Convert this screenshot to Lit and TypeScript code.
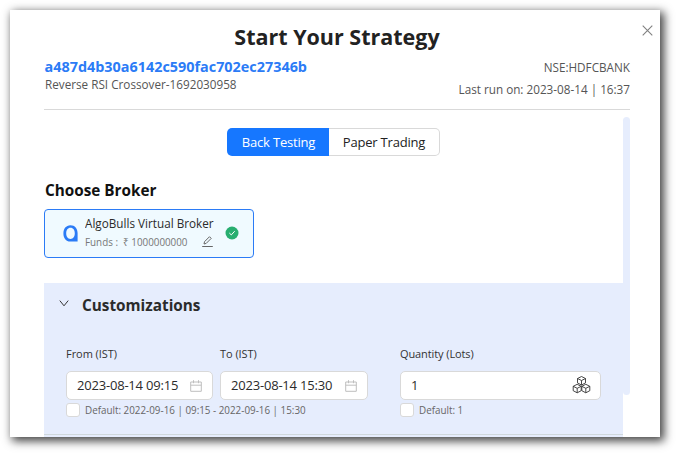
import { LitElement, html, css, svg } from "lit";
import { customElement, property } from "lit/decorators.js";

const calendar = html`<svg width="12" height="12" viewBox="0 0 12 12" fill="none" stroke="#bfbfbf">
  <path d="M.7 2h10.6v9.3H.7zM.7 5.2h10.6M3.5 .2v3M8.5 .2v3" />
</svg>`;

const cube = (x: number, y: number) => svg`<path transform="translate(${x} ${y})"
  d="M4.500 .5 8.500 2.500v4.400L4.500 9 .5 6.900V2.500zM.5 2.500l4 2 4-2M4.500 4.500v4.400" />`;

@customElement("date-field")
export class DateField extends LitElement {
  @property() label = "";
  @property() value = "";

  static styles = css`
    :host { display: block; }
    .label { font-size: 11px; line-height: 16px; color: #333; letter-spacing: -0.05px; }
    .box {
      box-sizing: border-box; height: 29px; margin-top: 9px; padding: 0 10px;
      display: flex; align-items: center; justify-content: space-between;
      background: #fff; border: 1px solid #d9d9d9; border-radius: 5px;
      font-size: 13px; line-height: 18px; color: #2b2b2b; white-space: nowrap; letter-spacing: -0.2px;
    }
    .box span { margin-top: -1px; }
    svg { display: block; flex: none; }
  `;

  render() {
    return html`
      <div class="label">${this.label}</div>
      <div class="box"><span>${this.value}</span>${calendar}</div>
    `;
  }
}

@customElement("app-root")
export class AppRoot extends LitElement {
  static styles = css`
    :host {
      display: block; box-sizing: border-box; width: 676px; height: 453px;
      padding: 10px 16px 16px 10px; background: #fff; overflow: hidden;
      font-family: "Open Sans", "Noto Sans", sans-serif; color: #222;
    }
    * { box-sizing: border-box; }
    svg { display: block; flex: none; }
    .dialog {
      position: relative; height: 427px; padding: 0 30px 0 34px;
      display: flex; flex-direction: column; background: #fff;
      box-shadow: 3px 3px 9px 1px rgba(0, 0, 0, 0.75);
    }
    .close { position: absolute; left: 632px; top: 15px; }
    h1 { margin: 12px 0 0; font-size: 21.5px; line-height: 30px; font-weight: 700; text-align: center; color: #222; }
    .head { display: flex; justify-content: space-between; height: 58px; border-bottom: 1px solid #d9d9d9; white-space: nowrap; }
    .id { margin: 5px 0 0 .5px; font-size: 14.4px; line-height: 20px; font-weight: 700; color: #2b7bf6; }
    .name { margin-left: .5px; font-size: 12.5px; line-height: 15px; color: #555; transform: scaleX(.937); transform-origin: left; }
    .meta { text-align: right; font-size: 12.5px; line-height: 22px; color: #555; padding-top: 5px; transform: scaleX(.937); transform-origin: right; }
    .scroll { flex: 1; min-height: 0; display: flex; overflow: hidden; }
    .body { width: 579px; flex: none; }
    .track { width: 7px; height: 278px; margin-top: 7px; border-radius: 4px; background: #e6edfd; }
    .tabs { display: flex; width: 213px; height: 28px; margin: 18px 0 0 183px; font-size: 13px; line-height: 28px; letter-spacing: -.2px; white-space: nowrap; }
    .tab { text-align: center; }
    .on { width: 102px; padding-left: 1px; color: #fff; background: #1677ff; border-radius: 5px 0 0 5px; }
    .off { width: 111px; line-height: 26px; border: 1px solid #d9d9d9; border-left: 0; border-radius: 0 5px 5px 0; }
    h2 { margin: 24px 0 0 .5px; font-size: 16px; line-height: 20px; font-weight: 700; color: #111; transform: scaleX(.955); transform-origin: left; }
    .broker {
      display: flex; align-items: center; width: 210px; height: 49px; margin-top: 9px; padding-left: 18px;
      background: #f0faff; border: 1px solid #2b7bf6; border-radius: 4px; white-space: nowrap;
    }
    .info { width: 128px; margin: -2px 0 0 7px; }
    .title { font-size: 12.5px; line-height: 18px; color: #2b2b2b; transform: scaleX(.937); transform-origin: left; }
    .funds { display: flex; align-items: center; justify-content: space-between; font-size: 10.3px; line-height: 18px; color: #777; }
    .small { display: block; transform: scaleX(.955); transform-origin: left; }
    .check { margin: -1px 0 0 12px; }
    .panel { height: 152px; margin-top: 25px; background: #e6edfd; border-bottom: 1px solid #d0d8dc; padding: 12px 22px 0; }
    .under { height: 10px; background: #e6edfd; }
    .bar { display: flex; align-items: center; margin-left: -7px; gap: 13px; }
    .bar svg { margin-top: -3px; }
    h3 { margin: 0; font-size: 16px; line-height: 20px; font-weight: 700; color: #2b2b2b; transform: scaleX(.957); transform-origin: left; }
    .fields { display: flex; margin-top: 31px; }
    .from { width: 147px; }
    .to { width: 148px; margin-left: 7px; }
    .qty { width: 201px; margin-left: 32px; }
    .label { font-size: 11px; line-height: 16px; color: #333; letter-spacing: -.1px; }
    .input {
      height: 29px; margin-top: 9px; padding: 0 9px 0 10px; display: flex; align-items: center; justify-content: space-between;
      background: #fff; border: 1px solid #d9d9d9; border-radius: 5px; font-size: 13px; line-height: 18px; color: #2b2b2b;
    }
    .input span { margin-top: -1px; }
    .input svg { margin-top: -2px; }
    .defaults { display: flex; margin-top: 3px; font-size: 10.3px; line-height: 14px; color: #666; white-space: nowrap; }
    .default { display: flex; flex: none; width: 334px; gap: 5px; }
    .default + .default { width: 180px; }
    .cb { width: 14px; height: 14px; flex: none; background: #fff; border: 1px solid #d9d9d9; border-radius: 3px; }
  `;

  render() {
    return html`
      <div class="dialog">
        <svg class="close" width="11" height="11" viewBox="0 0 11 11" stroke="#808080" stroke-width="1.1" fill="none"><path d="M.7.7l9.6 9.6M10.3.7.7 10.3" /></svg>
        <h1>Start Your Strategy</h1>
        <div class="head">
          <div>
            <div class="id">a487d4b30a6142c590fac702ec27346b</div>
            <div class="name">Reverse RSI Crossover-1692030958</div>
          </div>
          <div class="meta">
            <div>NSE:HDFCBANK</div>
            <div>Last run on: 2023-08-14 | 16:37</div>
          </div>
        </div>
        <div class="scroll">
          <div class="body">
            <div class="tabs"><div class="tab on">Back Testing</div><div class="tab off">Paper Trading</div></div>
            <h2>Choose Broker</h2>
            <div class="broker">
              <svg width="15" height="17" viewBox="0 0 15 17" fill="#2b7bf6" fill-rule="evenodd">
                <path d="M7.4.2C12 .2 14.6 3.6 14.6 8v8.5H7.3C3 16.500 .4 13 .4 8.400S3 .2 7.400 .2zM7.500 2.700C4.800 2.700 3.200 5 3.200 8.300s1.600 5.600 4.300 5.600 4.300-2.300 4.300-5.600-1.600-5.600-4.300-5.600z" />
              </svg>
              <div class="info">
                <div class="title">AlgoBulls Virtual Broker</div>
                <div class="funds"><span class="small">Funds : &nbsp;₹ 1000000000</span>
                  <svg width="11" height="11" viewBox="0 0 11 11" fill="none" stroke="#666"><path d="M.2 10.500h10.600M2 8l.5-2.300L7.500.7l1.700 1.700-5 5z" /></svg>
                </div>
              </div>
              <svg class="check" width="14" height="14" viewBox="0 0 14 14"><circle cx="7" cy="7" r="6.500" fill="#28ae70" /><path d="M4.300 7l2 1.900 3.400-3.700" fill="none" stroke="#fff" /></svg>
            </div>
            <div class="panel">
              <div class="bar">
                <svg width="10" height="7" viewBox="0 0 10 7" fill="none" stroke="#333"><path d="M.8.6 5 5.800 9.200.6" /></svg>
                <h3>Customizations</h3>
              </div>
              <div class="fields">
                <date-field class="from" label="From (IST)" value="2023-08-14 09:15"></date-field>
                <date-field class="to" label="To (IST)" value="2023-08-14 15:30"></date-field>
                <div class="qty">
                  <div class="label">Quantity (Lots)</div>
                  <div class="input"><span>1</span>
                    <svg width="19" height="18" viewBox="0 0 19 18" fill="none" stroke="#333" stroke-width=".9">${cube(5, 0)}${cube(0.7, 7.8)}${cube(9.3, 7.8)}</svg>
                  </div>
                </div>
              </div>
              <div class="defaults">
                <div class="default"><span class="cb"></span><span class="small">Default: 2022-09-16 | 09:15 - 2022-09-16 | 15:30</span></div>
                <div class="default"><span class="cb"></span><span class="small">Default: 1</span></div>
              </div>
            </div>
            <div class="under"></div>
          </div>
          <div class="track"></div>
        </div>
      </div>
    `;
  }
}
